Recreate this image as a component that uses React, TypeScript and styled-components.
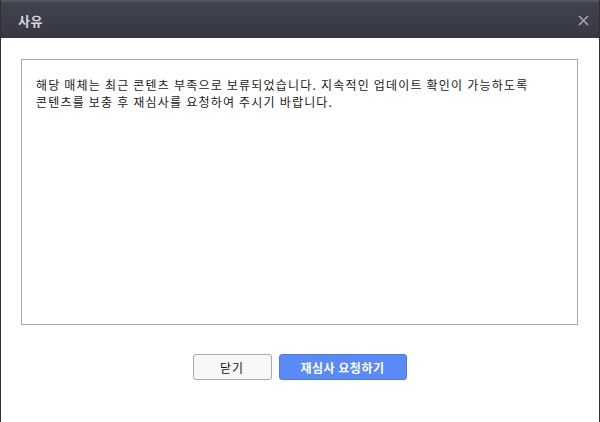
import styled, { createGlobalStyle } from "styled-components";

const GlobalStyle = createGlobalStyle`
  html, body {
    margin: 0;
    padding: 0;
    background: #ffffff;
  }
  body {
    font-family: "Noto Sans CJK KR", "Noto Sans", "Liberation Sans", sans-serif;
  }
`;

const Dialog = styled.div`
  width: 600px;
  height: 422px;
  box-sizing: border-box;
  display: flex;
  flex-direction: column;
  background: #ffffff;
  border-left: 1px solid #2f2f33;
  border-right: 1px solid #2f2f33;
`;

const Header = styled.div`
  height: 38px;
  box-sizing: border-box;
  display: flex;
  align-items: center;
  justify-content: space-between;
  padding: 0 8px 0 17px;
  background: linear-gradient(#41434f, #363743);
  border-top: 2px solid #54555d;
`;

const Title = styled.h1`
  margin: 0;
  font-size: 13px;
  font-weight: 700;
  color: #d8d8dc;
  letter-spacing: 0.5px;
`;

const CloseButton = styled.button`
  width: 16px;
  height: 16px;
  padding: 0;
  border: none;
  background: transparent;
  display: flex;
  align-items: center;
  justify-content: center;
  cursor: pointer;
`;

const Body = styled.div`
  flex: 1;
  display: flex;
  flex-direction: column;
  padding: 21px 21px 0 20px;
`;

const ReasonBox = styled.div`
  height: 266px;
  box-sizing: border-box;
  border: 1px solid #ababab;
  padding: 16px 14px;
  font-size: 12px;
  line-height: 17px;
  letter-spacing: 1.2px;
  color: #1a1a1a;
  white-space: pre-wrap;
`;

const Actions = styled.div`
  display: flex;
  justify-content: center;
  gap: 7px;
  margin-top: 29px;
`;

const Button = styled.button<{ $primary?: boolean }>`
  height: 26px;
  width: ${(p) => (p.$primary ? "128px" : "79px")};
  box-sizing: border-box;
  border-radius: 3px;
  border: 1px solid ${(p) => (p.$primary ? "#4d7ce8" : "#aaaaaa")};
  background: ${(p) => (p.$primary ? "#5a8af8" : "#f7f7f7")};
  color: ${(p) => (p.$primary ? "#ffffff" : "#111111")};
  font-family: inherit;
  font-size: 12px;
  font-weight: ${(p) => (p.$primary ? 700 : 400)};
  letter-spacing: ${(p) => (p.$primary ? "0.5px" : "1px")};
  cursor: pointer;
`;

const REASON =
  "해당 매체는 최근 콘텐츠 부족으로 보류되었습니다. 지속적인 업데이트 확인이 가능하도록\n콘텐츠를 보충 후 재심사를 요청하여 주시기 바랍니다.";

export default function App() {
  return (
    <>
      <GlobalStyle />
      <Dialog>
        <Header>
          <Title>사유</Title>
          <CloseButton aria-label="닫기">
            <svg width="11" height="11" viewBox="0 0 11 11">
              <path d="M1 1L10 10M10 1L1 10" stroke="#a9a9b2" strokeWidth="1.5" />
            </svg>
          </CloseButton>
        </Header>
        <Body>
          <ReasonBox>{REASON}</ReasonBox>
          <Actions>
            <Button>닫기</Button>
            <Button $primary>재심사 요청하기</Button>
          </Actions>
        </Body>
      </Dialog>
    </>
  );
}
